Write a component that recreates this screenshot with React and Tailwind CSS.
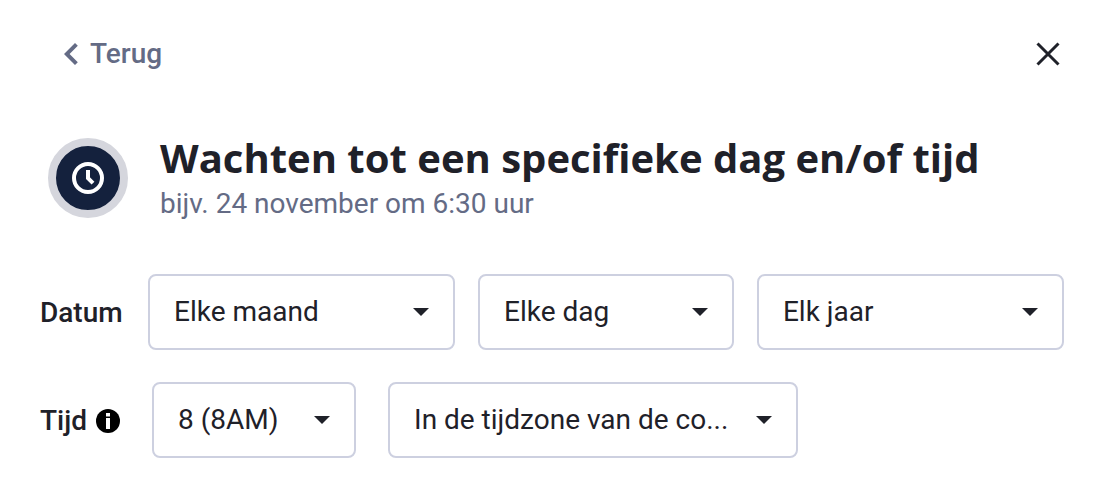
import { useState } from 'react'

const DATE_FIELDS = [
  { key: 'month', label: 'Maand', options: ['Elke maand', 'Januari', 'Februari', 'Maart'] },
  { key: 'day', label: 'Dag', options: ['Elke dag', '1', '2', '3'] },
  { key: 'year', label: 'Jaar', options: ['Elk jaar', '2024', '2025', '2026'] },
]

const HOURS = ['8 (8AM)', '9 (9AM)', '10 (10AM)', '11 (11AM)']
const ZONES = ['In de tijdzone van de co...', 'In mijn tijdzone']

function Select({ id, label, options, className = '' }) {
  const [value, setValue] = useState(options[0])

  return (
    <div className={`relative min-w-0 ${className}`}>
      <select
        id={id}
        aria-label={label}
        value={value}
        onChange={(e) => setValue(e.target.value)}
        className="block h-[76px] w-full appearance-none truncate rounded-lg border-2 border-[#cdd0e0] bg-white pl-6 pr-14 text-[28px] text-[#1f2129]"
      >
        {options.map((o) => (
          <option key={o}>{o}</option>
        ))}
      </select>
      <svg
        viewBox="0 0 16 8"
        className="pointer-events-none absolute right-[26px] top-[34px] h-2 w-4 fill-[#1f2129]"
        aria-hidden="true"
      >
        <path d="M0 0h16L8 8z" />
      </svg>
    </div>
  )
}

function ClockBadge() {
  return (
    <div className="flex size-20 shrink-0 items-center justify-center rounded-full border-8 border-[#d5d6dd] bg-[#14213d]">
      <svg viewBox="0 0 32 32" className="size-8" fill="none" stroke="#fff" strokeWidth="4" aria-hidden="true">
        <circle cx="16" cy="16" r="14" />
        <path d="M16 8v8.2l5 5" />
      </svg>
    </div>
  )
}

function InfoIcon() {
  return (
    <svg viewBox="0 0 24 24" className="size-6 shrink-0" role="img" aria-label="Info">
      <circle cx="12" cy="12" r="12" fill="#000" />
      <path d="M10 4h4v3.5h-4zM10 9h4v11h-4z" fill="#fff" />
    </svg>
  )
}

export default function App() {
  return (
    <main className="bg-white pb-10 pl-10 pr-[42px] pt-8 font-['Roboto',sans-serif] text-[28px] text-[#1f2129]">
      <div className="flex h-11 items-center justify-between pl-6">
        <button type="button" className="flex items-center gap-3 font-medium text-[#646b85]">
          <svg viewBox="0 0 14 22" className="h-[22px] w-3.5" fill="currentColor" aria-hidden="true">
            <path d="M11 0 0 11l11 11 2.8-2.8L5.6 11l8.2-8.2z" />
          </svg>
          Terug
        </button>
        <button type="button" aria-label="Sluiten" className="mr-1">
          <svg viewBox="0 0 24 24" className="size-6" fill="none" stroke="currentColor" strokeWidth="3" aria-hidden="true">
            <path d="m1.5 1.5 21 21M22.5 1.5l-21 21" />
          </svg>
        </button>
      </div>

      <header className="mt-14 flex items-center gap-8 pl-2">
        <ClockBadge />
        <div className="min-w-0">
          <h1 className="font-['Open_Sans',sans-serif] text-[40px] font-bold leading-[52px]">
            Wachten tot een specifieke dag en/of tijd
          </h1>
          <p className="leading-10 text-[#646b85]">bijv. 24 november om 6:30 uur</p>
        </div>
      </header>

      <form>
        <div className="mt-[50px] flex items-center">
          <label htmlFor="month" className="w-[108px] shrink-0 pt-0.5 font-medium">
            Datum
          </label>
          <div className="grid min-w-0 flex-1 grid-cols-[6fr_5fr_6fr] gap-[23px]">
            {DATE_FIELDS.map(({ key, label, options }) => (
              <Select key={key} id={key} label={label} options={options} />
            ))}
          </div>
        </div>

        <div className="mt-8 flex items-center gap-8">
          <div className="flex items-center gap-[9px] pt-0.5">
            <label htmlFor="hour" className="font-medium">
              Tijd
            </label>
            <InfoIcon />
          </div>
          <Select id="hour" label="Uur" options={HOURS} className="w-[204px]" />
          <Select id="zone" label="Tijdzone" options={ZONES} className="w-[410px]" />
        </div>
      </form>
    </main>
  )
}
